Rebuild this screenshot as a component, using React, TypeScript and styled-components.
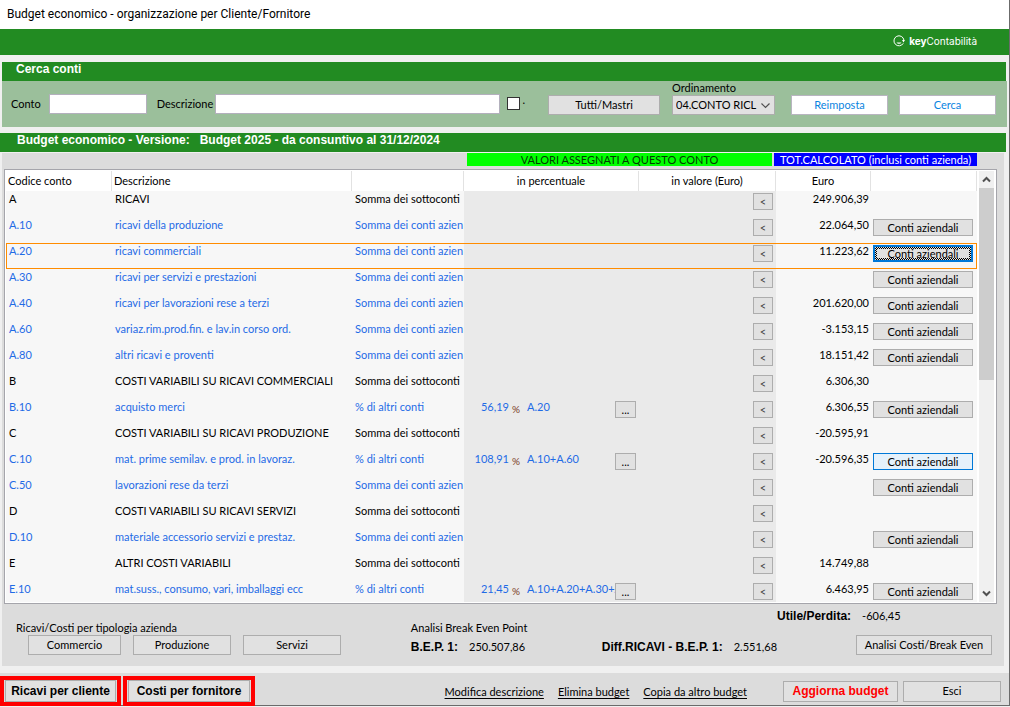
import React from 'react';
import styled, { createGlobalStyle, css } from 'styled-components';

const GlobalStyle = createGlobalStyle`
  * { box-sizing: border-box; }
  body {
    margin: 0;
    background: #f0f0f0;
    color: #000;
    font: 11px/14px Lato, "Liberation Sans", sans-serif;
  }
  button, input, select { font: inherit; color: inherit; margin: 0; border-radius: 0; }
`;

const Window = styled.div`
  display: flex;
  flex-direction: column;
  border-right: 1px solid #6b6b6b;
  border-bottom: 1px solid #6b6b6b;
`;

const TitleBar = styled.header`
  height: 29px;
  padding: 0 7px;
  background: #fff;
  font: 12px/28px Roboto, sans-serif;
`;

const BrandBar = styled.div`
  display: flex;
  align-items: center;
  justify-content: flex-end;
  gap: 4px;
  height: 26px;
  margin-bottom: 7px;
  padding: 0 32px 2px;
  background: #228b22;
  color: #fff;
  font: 10px/14px Inter, sans-serif;
`;

const SectionTitle = styled.h2<{ $inset?: boolean }>`
  height: 19px;
  margin: 0 3px 0 ${p => (p.$inset ? '2px' : '0')};
  padding: 0 ${p => (p.$inset ? '14px' : '17px')};
  background: #228b22;
  color: #fff;
  font: bold 12px/15px "Liberation Sans", Arial, sans-serif;
  white-space: pre;
`;

const SearchForm = styled.form`
  display: flex;
  align-items: flex-start;
  height: 46px;
  margin: 0 2px 6px;
  padding: 0 11px 0 9px;
  background: #9bbf9b;
`;

const Field = styled.label<{ $wide?: boolean }>`
  display: flex;
  align-items: center;
  gap: ${p => (p.$wide ? '2px' : '8px')};
  flex: ${p => (p.$wide ? '1' : 'none')};
  margin: 13px 0 0 ${p => (p.$wide ? '10px' : '0')};
`;

const TextInput = styled.input<{ $grow?: boolean }>`
  width: 98px;
  min-width: 0;
  height: 20px;
  border: 1px solid #b3b0bd;
  background: #fff;
  ${p => p.$grow && css`flex: 1;`}
`;

const CheckField = styled.label`
  display: flex;
  margin: 16px 23px 0 7px;
  gap: 2px;
  line-height: 6px;
`;

const CheckBox = styled.input`
  appearance: none;
  width: 13px;
  height: 13px;
  border: 1px solid #333;
  background: #fff;
`;

const SortField = styled.label`
  display: flex;
  flex-direction: column;
  width: 103px;
  margin: 0 16px 0 12px;
`;

const SelectBox = styled.span`
  display: flex;
  align-items: center;
  height: 20px;
  padding-right: 4px;
  border: 1px solid #adadad;
  background: #e1e1e1;
`;

const Select = styled.select`
  appearance: none;
  flex: 1;
  min-width: 0;
  height: 18px;
  padding: 0 0 0 3px;
  border: 0;
  background: none;
`;

type ButtonKind = 'plain' | 'white' | 'focused' | 'hover';

const Button = styled.button<{ $kind?: ButtonKind; $width: number; $height?: number; $accent?: boolean; $strong?: boolean }>`
  flex: none;
  width: ${p => p.$width}px;
  height: ${p => p.$height ?? 20}px;
  padding: 0;
  border: 1px solid #adadad;
  background: #e1e1e1;
  line-height: 14px;
  white-space: nowrap;
  ${p => p.$kind === 'white' && css`background: #fff; border-color: #b8b5c0; color: #0a84e0;`}
  ${p => p.$kind === 'hover' && css`background: #e5f1fb; border-color: #0078d7;`}
  ${p => p.$kind === 'focused' && css`
    border: 2px solid #0078d7;
    padding: 2px;
    line-height: 9px;
    background:
      linear-gradient(#e1e1e1, #e1e1e1) content-box,
      repeating-conic-gradient(#000 0 25%, #e1e1e1 0 50%) padding-box 0 0 / 2px 2px;
  `}
  ${p => p.$strong && css`font: bold 12px/14px "Liberation Sans", Arial, sans-serif;`}
  ${p => p.$accent && css`color: #f00;`}
`;

const SearchActions = styled.div`
  display: flex;
  gap: 11px;
  margin-top: 14px;
`;

const GridPanel = styled.main`
  margin: 1px 5px 7px 2px;
  background: #dcdcdc;
`;

const BandRow = styled.div`
  display: flex;
  justify-content: flex-end;
  gap: 2px;
  height: 16px;
  padding-right: 27px;
`;

const Band = styled.div<{ $width: number; $back: string; $fore: string }>`
  width: ${p => p.$width}px;
  height: 13px;
  background: ${p => p.$back};
  color: ${p => p.$fore};
  text-align: center;
  line-height: 14px;
  white-space: nowrap;
`;

const GridFrame = styled.div`
  display: flex;
  height: 435px;
  margin: 0 7px 0 2px;
  padding: 1px 2px 1px 1px;
  border: 1px solid #a5a5ab;
  background: #fff;
`;

const GridView = styled.div`
  flex: 1;
  min-width: 0;
  overflow: hidden;
`;

const Table = styled.table`
  width: 100%;
  table-layout: fixed;
  border-collapse: separate;
  border-spacing: 0;
  background: #f7f7f7;
`;

const Col = styled.col<{ $width?: number }>`
  width: ${p => (p.$width ? `${p.$width}px` : 'auto')};
`;

const HeadCell = styled.th<{ $align?: 'left' | 'center' }>`
  height: 20px;
  padding: 0 2px;
  border-right: 1px solid #e2e2e2;
  background: #fff;
  font-weight: normal;
  text-align: ${p => p.$align ?? 'left'};
  white-space: nowrap;
`;

const Row = styled.tr<{ $link?: boolean; $current?: boolean }>`
  color: ${p => (p.$link ? '#1f6be6' : '#000')};
  ${p => p.$current && css`
    outline: 1px solid #ff8c00;
    outline-offset: -1px;
  `}
`;

const Cell = styled.td<{ $shade?: boolean; $right?: boolean; $control?: boolean }>`
  height: 26px;
  padding: ${p => (p.$control ? '2px 3px 0 2px' : '1px 0 0 3px')};
  background: ${p => (p.$shade ? '#eaeaea' : 'transparent')};
  text-align: ${p => (p.$right ? 'right' : 'left')};
  vertical-align: top;
  white-space: nowrap;
`;

const Amount = styled(Cell)`
  padding: 1px 2px 0 0;
  color: #000;
`;

const Percent = styled.div`
  display: flex;
  align-items: flex-start;
`;

const PercentValue = styled.span`
  width: 42px;
  text-align: right;
`;

const PercentSign = styled.span`
  width: 18px;
  padding-left: 3px;
  color: #7a3d1c;
  font-size: 10px;
  line-height: 18px;
`;

const Formula = styled.span`
  width: 88px;
  overflow: hidden;
`;

const PickButton = styled(Button)`
  margin-top: 1px;
  color: #000;
`;

const RowButton = styled(Button)`
  display: block;
  color: #000;
`;

const StepButton = styled(RowButton)`
  margin-left: auto;
  color: #444;
`;

const ScrollBar = styled.div`
  display: flex;
  flex-direction: column;
  width: 15px;
  margin-left: 2px;
  background: #f0f0f0;
`;

const ScrollArrow = styled.button`
  display: flex;
  align-items: center;
  justify-content: center;
  height: 17px;
  padding: 0;
  border: 0;
  background: #f0f0f0;
`;

const ScrollThumb = styled.div`
  height: 192px;
  margin-bottom: auto;
  background: #cdcdcd;
`;

const Summary = styled.section`
  display: flex;
  align-items: flex-end;
  height: 62px;
  padding: 0 12px 11px 14px;
`;

const SummaryGroup = styled.div<{ $width?: number }>`
  display: flex;
  flex-direction: column;
  width: ${p => (p.$width ? `${p.$width}px` : 'auto')};
`;

const TypeButtons = styled.div`
  display: flex;
  gap: 12px;
  padding-left: 12px;
`;

const Figure = styled.div`
  display: flex;
  gap: 11px;
  height: 20px;
  padding-top: 3px;
  align-items: center;
  white-space: nowrap;

  strong { font: bold 12px/14px "Liberation Sans", Arial, sans-serif; }
`;

const ResultGroup = styled.div`
  display: flex;
  flex-direction: column;
  justify-content: space-between;
  width: 215px;
  height: 51px;
  margin-left: auto;
`;

const ResultAction = styled.div`
  display: flex;
  justify-content: flex-end;
`;

const Footer = styled.footer`
  display: flex;
  align-items: center;
  height: 32px;
  padding-right: 8px;
  background: #dcdcdc;
`;

const Highlight = styled.div`
  display: flex;
  height: 30px;
  margin: 3px 2px 0 0;
  padding: 0 1px;
  border: 4px solid #f00;
`;

const FooterLinks = styled.nav`
  display: flex;
  gap: 14px;
  margin: 6px 36px 0 auto;
  white-space: nowrap;

  a { color: inherit; text-underline-offset: 2px; }
`;

const FooterActions = styled.div`
  display: flex;
  gap: 5px;
  margin-top: 4px;
`;

type Account = {
  code: string;
  name: string;
  kind: 'sub' | 'firm' | 'pct';
  pct?: string;
  formula?: string;
  total?: string;
  button?: ButtonKind;
};

const kindText = { sub: 'Somma dei sottoconti', firm: 'Somma dei conti azien', pct: '% di altri conti' };

const accounts: Account[] = [
  { code: 'A', name: 'RICAVI', kind: 'sub', total: '249.906,39' },
  { code: 'A.10', name: 'ricavi della produzione', kind: 'firm', total: '22.064,50', button: 'plain' },
  { code: 'A.20', name: 'ricavi commerciali', kind: 'firm', total: '11.223,62', button: 'focused' },
  { code: 'A.30', name: 'ricavi per servizi e prestazioni', kind: 'firm', button: 'plain' },
  { code: 'A.40', name: 'ricavi per lavorazioni rese a terzi', kind: 'firm', total: '201.620,00', button: 'plain' },
  { code: 'A.60', name: 'variaz.rim.prod.fin. e lav.in corso ord.', kind: 'firm', total: '-3.153,15', button: 'plain' },
  { code: 'A.80', name: 'altri ricavi e proventi', kind: 'firm', total: '18.151,42', button: 'plain' },
  { code: 'B', name: 'COSTI VARIABILI SU RICAVI COMMERCIALI', kind: 'sub', total: '6.306,30' },
  { code: 'B.10', name: 'acquisto merci', kind: 'pct', pct: '56,19', formula: 'A.20', total: '6.306,55', button: 'plain' },
  { code: 'C', name: 'COSTI VARIABILI SU RICAVI PRODUZIONE', kind: 'sub', total: '-20.595,91' },
  { code: 'C.10', name: 'mat. prime semilav. e prod. in lavoraz.', kind: 'pct', pct: '108,91', formula: 'A.10+A.60', total: '-20.596,35', button: 'hover' },
  { code: 'C.50', name: 'lavorazioni rese da terzi', kind: 'firm', button: 'plain' },
  { code: 'D', name: 'COSTI VARIABILI SU RICAVI SERVIZI', kind: 'sub' },
  { code: 'D.10', name: 'materiale accessorio servizi e prestaz.', kind: 'firm', button: 'plain' },
  { code: 'E', name: 'ALTRI COSTI VARIABILI', kind: 'sub', total: '14.749,88' },
  { code: 'E.10', name: 'mat.suss., consumo, vari, imballaggi ecc', kind: 'pct', pct: '21,45', formula: 'A.10+A.20+A.30+A', total: '6.463,95', button: 'plain' },
];

const Chevron = ({ up, thin }: { up?: boolean; thin?: boolean }) => (
  <svg width="9" height="7" viewBox="0 0 9 7" fill="none" stroke="#505050" strokeWidth={thin ? 1.2 : 2} aria-hidden="true">
    <path d={up ? 'M1 5.5 4.5 2 8 5.5' : thin ? 'M.5 1.5 4.5 5.5 8.5 1.5' : 'M1 1.5 4.5 5 8 1.5'} />
  </svg>
);

const BrandMark = () => (
  <svg width="12" height="12" viewBox="0 0 12 12" fill="none" stroke="#fff" aria-hidden="true">
    <path d="M10.3 8.3A5 5 0 1 1 10.9 5" strokeWidth="1" />
    <path d="M9 5h3l-1.5 2.5z" fill="#fff" stroke="none" />
    <path d="M3.5 7.5C4.5 9.3 7.5 9.3 8.5 7.5z" fill="#fff" stroke="none" />
  </svg>
);

const AccountRow = ({ account }: { account: Account }) => (
  <Row $link={account.kind !== 'sub'} $current={account.button === 'focused'}>
    <Cell>{account.code}</Cell>
    <Cell>{account.name}</Cell>
    <Cell>{kindText[account.kind]}</Cell>
    <Cell $shade>
      {account.pct && (
        <Percent>
          <PercentValue>{account.pct}</PercentValue>
          <PercentSign>%</PercentSign>
          <Formula>{account.formula}</Formula>
          <PickButton type="button" $width={21} $height={17}>...</PickButton>
        </Percent>
      )}
    </Cell>
    <Cell $shade $control>
      <StepButton type="button" $width={20} $height={17}>&lt;</StepButton>
    </Cell>
    <Amount $right>{account.total}</Amount>
    <Cell $control>
      {account.button && (
        <RowButton type="button" $kind={account.button} $width={100} $height={17}>Conti aziendali</RowButton>
      )}
    </Cell>
  </Row>
);

export default function App() {
  return (
    <Window>
      <GlobalStyle />
      <TitleBar>Budget economico - organizzazione per Cliente/Fornitore</TitleBar>
      <BrandBar>
        <BrandMark />
        <span><b>key</b>Contabilità</span>
      </BrandBar>

      <SectionTitle $inset>Cerca conti</SectionTitle>
      <SearchForm>
        <Field>Conto<TextInput type="text" /></Field>
        <Field $wide>Descrizione<TextInput type="text" $grow /></Field>
        <CheckField><CheckBox type="checkbox" />.</CheckField>
        <SearchActions>
          <Button type="button" $width={112}>Tutti/Mastri</Button>
        </SearchActions>
        <SortField>
          Ordinamento
          <SelectBox>
            <Select><option>04.CONTO RICL</option></Select>
            <Chevron thin />
          </SelectBox>
        </SortField>
        <SearchActions>
          <Button type="button" $kind="white" $width={97}>Reimposta</Button>
          <Button type="button" $kind="white" $width={97}>Cerca</Button>
        </SearchActions>
      </SearchForm>

      <SectionTitle>{'Budget economico - Versione:   Budget 2025 - da consuntivo al 31/12/2024'}</SectionTitle>
      <GridPanel>
        <BandRow>
          <Band $width={305} $back="#00ff00" $fore="#003c00">VALORI ASSEGNATI A QUESTO CONTO</Band>
          <Band $width={203} $back="#0000ff" $fore="#fff">TOT.CALCOLATO (inclusi conti azienda)</Band>
        </BandRow>
        <GridFrame>
          <GridView>
            <Table>
              <colgroup>
                <Col $width={106} />
                <Col />
                <Col $width={112} />
                <Col $width={175} />
                <Col $width={137} />
                <Col $width={95} />
                <Col $width={106} />
              </colgroup>
              <thead>
                <tr>
                  <HeadCell>Codice conto</HeadCell>
                  <HeadCell>Descrizione</HeadCell>
                  <HeadCell />
                  <HeadCell $align="center">in percentuale</HeadCell>
                  <HeadCell $align="center">in valore (Euro)</HeadCell>
                  <HeadCell $align="center">Euro</HeadCell>
                  <HeadCell />
                </tr>
              </thead>
              <tbody>
                {accounts.map(account => <AccountRow key={account.code} account={account} />)}
              </tbody>
            </Table>
          </GridView>
          <ScrollBar>
            <ScrollArrow type="button" aria-label="Su"><Chevron up /></ScrollArrow>
            <ScrollThumb />
            <ScrollArrow type="button" aria-label="Giù"><Chevron /></ScrollArrow>
          </ScrollBar>
        </GridFrame>

        <Summary>
          <SummaryGroup $width={395}>
            Ricavi/Costi per tipologia azienda
            <TypeButtons>
              <Button type="button" $width={93}>Commercio</Button>
              <Button type="button" $width={98}>Produzione</Button>
              <Button type="button" $width={98}>Servizi</Button>
            </TypeButtons>
          </SummaryGroup>
          <SummaryGroup $width={191}>
            Analisi Break Even Point
            <Figure><strong>B.E.P. 1:</strong>250.507,86</Figure>
          </SummaryGroup>
          <SummaryGroup>
            <Figure><strong>Diff.RICAVI - B.E.P. 1:</strong>2.551,68</Figure>
          </SummaryGroup>
          <ResultGroup>
            <Figure><strong>Utile/Perdita:</strong>-606,45</Figure>
            <ResultAction>
              <Button type="button" $width={136}>Analisi Costi/Break Even</Button>
            </ResultAction>
          </ResultGroup>
        </Summary>
      </GridPanel>

      <Footer>
        <Highlight><Button type="button" $strong $width={111} $height={22}>Ricavi per cliente</Button></Highlight>
        <Highlight><Button type="button" $strong $width={122} $height={22}>Costi per fornitore</Button></Highlight>
        <FooterLinks>
          <a href="#descrizione">Modifica descrizione</a>
          <a href="#elimina">Elimina budget</a>
          <a href="#copia">Copia da altro budget</a>
        </FooterLinks>
        <FooterActions>
          <Button type="button" $strong $accent $width={115} $height={21}>Aggiorna budget</Button>
          <Button type="button" $width={98} $height={21}>Esci</Button>
        </FooterActions>
      </Footer>
    </Window>
  );
}
